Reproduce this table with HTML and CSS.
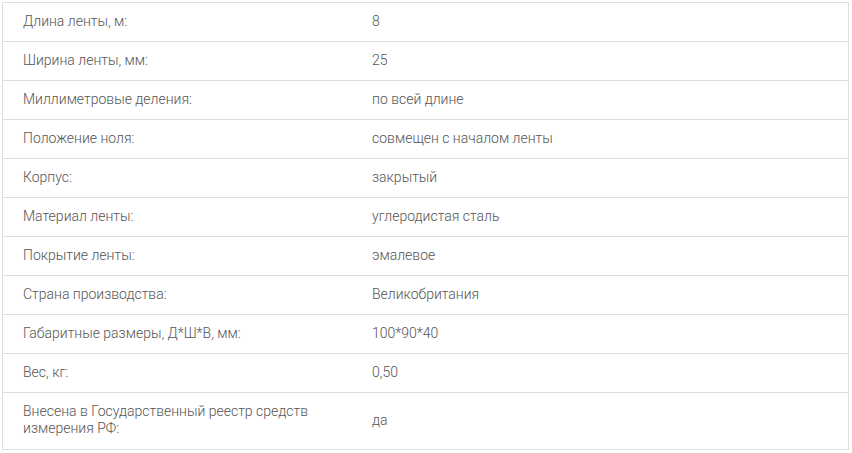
FILE: index.html
```html
<!DOCTYPE html>
<html lang="ru">
<head>
<meta charset="utf-8">
<link rel="stylesheet" href="styles.css">
</head>
<body>
<table class="specs">
<tbody>
<tr><td class="label">Длина ленты, м:</td><td class="value">8</td></tr>
<tr><td class="label">Ширина ленты, мм:</td><td class="value">25</td></tr>
<tr><td class="label">Миллиметровые деления:</td><td class="value">по всей длине</td></tr>
<tr><td class="label">Положение ноля:</td><td class="value">совмещен с началом ленты</td></tr>
<tr><td class="label">Корпус:</td><td class="value">закрытый</td></tr>
<tr><td class="label">Материал ленты:</td><td class="value">углеродистая сталь</td></tr>
<tr><td class="label">Покрытие ленты:</td><td class="value">эмалевое</td></tr>
<tr><td class="label">Страна производства:</td><td class="value">Великобритания</td></tr>
<tr><td class="label">Габаритные размеры, Д*Ш*В, мм:</td><td class="value">100*90*40</td></tr>
<tr><td class="label">Вес, кг:</td><td class="value">0,50</td></tr>
<tr class="tall"><td class="label">Внесена в Государственный реестр средств измерения РФ:</td><td class="value">да</td></tr>
</tbody>
</table>
</body>
</html>
```
FILE: styles.css
```css
html, body {
  margin: 0;
  padding: 0;
  background: #fff;
}
body {
  padding: 2px 0 0 2px;
  font-family: Roboto, "Liberation Sans", Arial, sans-serif;
  font-size: 14px;
  font-weight: 300;
  line-height: 17px;
  color: #555;
}
.specs {
  width: 847px;
  border-collapse: collapse;
  border: 1px solid #ddd;
  table-layout: fixed;
}
.specs tr {
  height: 39px;
  border-bottom: 1px solid #ddd;
}
.specs tr.tall {
  height: 57px;
}
.specs td {
  padding: 0 20px 2px;
  vertical-align: middle;
}
.specs .label {
  width: 309px;
}
.specs .value {
  padding-left: 20px;
}
```
